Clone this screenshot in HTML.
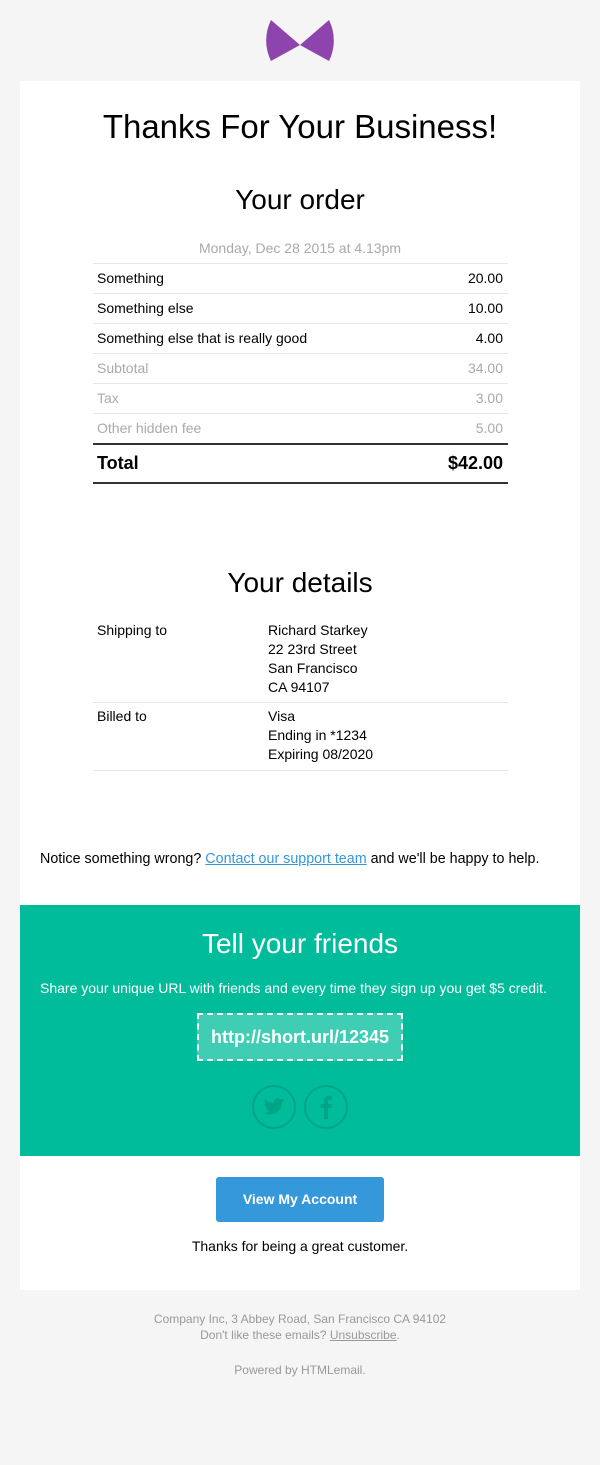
<!DOCTYPE html>
<html><head><style>
body{margin:0;background:#f5f5f5;font-family:"Liberation Sans",sans-serif;color:#000;}
.wrap{position:relative;width:600px;height:1465px;}
.card{position:absolute;left:20px;top:81px;width:560px;height:1209px;background:#fff;}
.abs{position:absolute;}
.c{text-align:center;width:100%;left:0;}
.row{position:absolute;left:93px;width:415px;height:29px;border-top:1px solid #e6e6e6;font-size:14px;line-height:29px;}
.row span{position:absolute;left:4px}.row b{position:absolute;right:5px;font-weight:normal}
.g{color:#aaa}
</style></head><body><div class="wrap">
<svg class="abs" style="left:262px;top:18px" width="76" height="46" viewBox="0 0 76 46">
<path d="M38 27 L9 2 A46 46 0 0 0 9 43 Z" fill="#8e44ad"/>
<path d="M38 27 L67 2 A46 46 0 0 1 67 43 Z" fill="#8e44ad"/>
</svg>
<div class="card"></div>
<div class="abs c" style="top:108px;font-size:33px;">Thanks For Your Business!</div>
<div class="abs c" style="top:184px;font-size:28px;">Your order</div>
<div class="abs c" style="top:240px;font-size:14px;color:#aaa;">Monday, Dec 28 2015 at 4.13pm</div>
<div class="row" style="top:263px"><span>Something</span><b>20.00</b></div>
<div class="row" style="top:293px"><span>Something else</span><b>10.00</b></div>
<div class="row" style="top:323px"><span>Something else that is really good</span><b>4.00</b></div>
<div class="row g" style="top:353px"><span>Subtotal</span><b>34.00</b></div>
<div class="row g" style="top:383px"><span>Tax</span><b>3.00</b></div>
<div class="row g" style="top:413px"><span>Other hidden fee</span><b>5.00</b></div>
<div class="abs" style="left:93px;top:443px;width:415px;height:37px;border-top:2px solid #333;border-bottom:2px solid #333;font-size:18px;font-weight:bold;line-height:37px;"><span style="position:absolute;left:4px">Total</span><span style="position:absolute;right:5px">$42.00</span></div>
<div class="abs c" style="top:567px;font-size:28px;">Your details</div>
<div class="abs" style="left:93px;top:621px;width:415px;height:81px;border-bottom:1px solid #e6e6e6;font-size:14px;line-height:19px;"><span style="position:absolute;left:4px">Shipping to</span><span style="position:absolute;left:175px">Richard Starkey<br>22 23rd Street<br>San Francisco<br>CA 94107</span></div>
<div class="abs" style="left:93px;top:707px;width:415px;height:63px;border-bottom:1px solid #e6e6e6;font-size:14px;line-height:19px;"><span style="position:absolute;left:4px">Billed to</span><span style="position:absolute;left:175px">Visa<br>Ending in *1234<br>Expiring 08/2020</span></div>
<div class="abs" style="left:40px;top:851px;font-size:14.3px;">Notice something wrong? <span style="color:#3498db;text-decoration:underline">Contact our support team</span> and we'll be happy to help.</div>
<div class="abs" style="left:20px;top:905px;width:560px;height:251px;background:#00bc9b;"></div>
<div class="abs c" style="top:928px;font-size:28px;color:#fff;">Tell your friends</div>
<div class="abs" style="left:40px;top:980px;font-size:14px;color:#fff;">Share your unique URL with friends and every time they sign up you get $5 credit.</div>
<div class="abs" style="left:197px;top:1013px;width:202px;height:44px;border:2px dashed #fff;background:#3fcdb4;color:#fff;font-weight:bold;font-size:18px;line-height:44px;text-align:center;">http://short.url/12345</div>
<svg class="abs" style="left:250px;top:1083px" width="100" height="48" viewBox="0 0 100 48">
<circle cx="24" cy="24" r="21" fill="none" stroke="#00a586" stroke-width="2"/>
<circle cx="76" cy="24" r="21" fill="none" stroke="#00a586" stroke-width="2"/>
<path d="M34 17c-.8.4-1.6.6-2.4.7.9-.5 1.5-1.3 1.8-2.3-.8.5-1.7.8-2.7 1-.8-.8-1.9-1.3-3-1.3-2.3 0-4.1 1.9-4.1 4.1 0 .3 0 .6.1.9-3.4-.2-6.5-1.8-8.5-4.3-.4.6-.6 1.3-.6 2.1 0 1.4.7 2.7 1.8 3.4-.7 0-1.3-.2-1.900-.5 0 2 1.4 3.7 3.3 4.1-.6.2-1.2.2-1.9.1.5 1.6 2.1 2.8 3.9 2.9-1.4 1.1-3.2 1.8-5.1 1.8H14c1.8 1.2 4 1.8 6.3 1.8 7.5 0 11.7-6.2 11.7-11.700v-.5c.8-.6 1.5-1.3 2-2.2z" fill="#00a586"/>
<path d="M78 36V25h3.5l.5-4H78v-2.5c0-1.1.3-1.9 1.9-1.9H82V13c-.4 0-1.6-.2-3-.2-3 0-5 1.8-5 5.1V21h-3.4v4H74v11z" fill="#00a586"/>
</svg>
<div class="abs" style="left:216px;top:1177px;width:168px;height:45px;background:#3498db;border-radius:3px;color:#fff;font-weight:bold;font-size:14px;line-height:45px;text-align:center;">View My Account</div>
<div class="abs c" style="top:1238px;font-size:14px;">Thanks for being a great customer.</div>
<div class="abs c" style="top:1311px;font-size:12px;color:#999;line-height:16px;">Company Inc, 3 Abbey Road, San Francisco CA 94102<br>Don't like these emails? <span style="text-decoration:underline">Unsubscribe</span>.</div>
<div class="abs c" style="top:1363px;font-size:12px;color:#999;">Powered by HTMLemail.</div>
</div></body></html>
